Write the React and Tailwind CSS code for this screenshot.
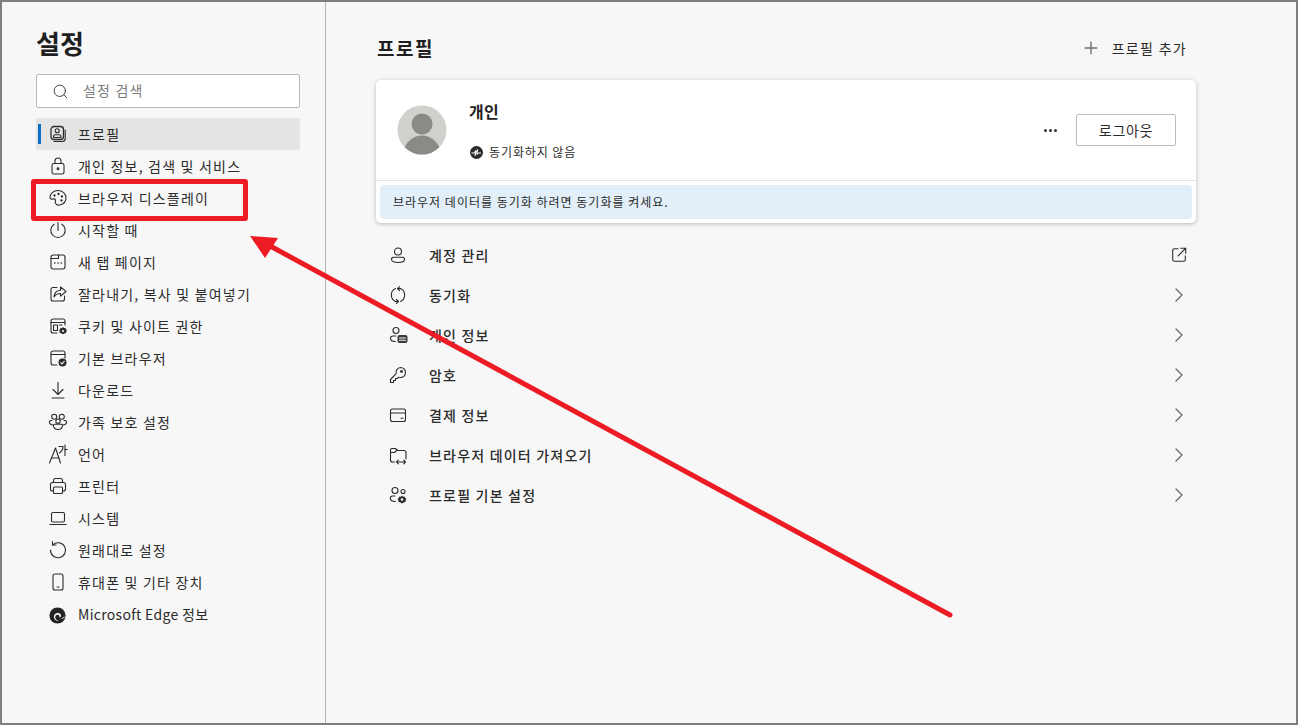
import { ChevronRight, Plus, Search } from "lucide-react"

const stroke = { fill: "none", stroke: "#2b2b2b", strokeWidth: 1.1, strokeLinecap: "round", strokeLinejoin: "round" }

const Ico = ({ children, size = 20 }) => (
  <svg width={size} height={size} viewBox="0 0 20 20" {...stroke}>{children}</svg>
)

const navIcons = {
  profile: <Ico><rect x="3" y="2.500" width="12.500" height="13" rx="3" strokeWidth="1.300" /><path d="M17.200 6v8.500a3 3 0 0 1-3 3H6" /><circle cx="9.200" cy="6.800" r="2" /><path d="M5.500 13.500v-1c0-1 .8-1.700 1.700-1.700h4c1 0 1.700.7 1.700 1.700v1z" /></Ico>,
  lock: <Ico><rect x="4" y="7.500" width="12" height="10.500" rx="1.800" /><path d="M7 7.500V5a3 3 0 0 1 6 0v2.500" /><circle cx="10" cy="12.800" r=".9" fill="#2b2b2b" /></Ico>,
  palette: <Ico><path d="M10 2.500c-4.500 0-8 3.200-8 7 0 1.300 1 1.800 2 1.600 1.400-.3 3-.6 3.400.6.4 1.300-.8 2.200.2 3.800 1 1.600 3 1.900 5 1.300 3.400-1 5.400-3.800 5.400-7 0-4.200-3.500-7.300-8-7.300z" /><circle cx="6.500" cy="7.500" r=".6" fill="#2b2b2b" /><circle cx="10.500" cy="6" r=".6" fill="#2b2b2b" /><circle cx="14" cy="8.500" r=".6" fill="#2b2b2b" /><circle cx="13.500" cy="12.500" r=".6" fill="#2b2b2b" /></Ico>,
  power: <Ico><path d="M10 2.500v8" /><path d="M6.200 4.200a7.200 7.200 0 1 0 7.600 0" /></Ico>,
  newtab: <Ico><rect x="3" y="3" width="14" height="14" rx="2.200" /><path d="M3 6.500h7.500V3" /><path d="M6.800 11h.1M10 11h.1M13.200 11h.1" strokeWidth="1.600" /></Ico>,
  share: <Ico><path d="M9 3.500H5A2 2 0 0 0 3 5.500V15a2 2 0 0 0 2 2h9.500a2 2 0 0 0 2-2v-3" /><path d="M12.500 2.800 18 7.500l-5.500 4.700V9.500c-3 0-5 1-6.500 3.500.3-4 2.500-6.500 6.500-6.800z" /></Ico>,
  cookies: <Ico><path d="M9 17H5a2 2 0 0 1-2-2V5a2 2 0 0 1 2-2h10a2 2 0 0 1 2 2v4" /><path d="M3 6.500h14" /><rect x="5.500" y="9" width="4" height="5.500" /><path d="M11.500 9H14" /><path d="M15 11l1 1.100 1.500-.2.400 1.400 1.100 1-.8 1.200.1 1.400-1.400.3-1.900 1-1.900-1-1.400-.3.100-1.400-.8-1.200 1.100-1 .4-1.400 1.500.2z" fill="#2b2b2b" stroke="none" /><circle cx="15" cy="15" r="1.100" fill="#f7f7f7" stroke="none" /></Ico>,
  browser: <Ico><path d="M9 17H5a2 2 0 0 1-2-2V5a2 2 0 0 1 2-2h10a2 2 0 0 1 2 2v5" /><path d="M3 6.500h14" /><circle cx="14.500" cy="14.500" r="4" fill="#2b2b2b" stroke="none" /><path d="m12.800 14.600 1.200 1.200 2.200-2.400" stroke="#f7f7f7" /></Ico>,
  download: <Ico><path d="M10 2.500v11.500" /><path d="m5 9.500 5 5 5-5" /><path d="M4 18h12" /></Ico>,
  family: <Ico><circle cx="6.200" cy="4.800" r="2.500" /><circle cx="13.800" cy="4.800" r="2.500" /><circle cx="10" cy="9.200" r="2.200" /><path d="M4 8.500H3c-1.200 0-1.800 1-1.500 2.200.4 1.500 1.800 2.300 3.500 2.300" /><path d="M16 8.500h1c1.200 0 1.800 1 1.500 2.200-.4 1.500-1.800 2.300-3.500 2.300" /><path d="M5.500 13.300c0 2.500 2 4.200 4.500 4.200s4.500-1.700 4.500-4.200c0-.6-.5-1-1-1h-7c-.5 0-1 .4-1 1z" /></Ico>,
  language: <Ico><path d="M1.500 19 7.500 4l5 15" /><path d="M3.500 14h7.500" /><path d="M11 2.500h4c0 3-1.300 5-3.500 6.500" /><path d="M17 1v10.500" /><path d="M17 5.500h2.200" /></Ico>,
  printer: <Ico><path d="M5.500 6.500V4.500a2 2 0 0 1 2-2h5a2 2 0 0 1 2 2v2" /><path d="M5.500 15H4.500a2 2 0 0 1-2-2V8.500a2 2 0 0 1 2-2h11a2 2 0 0 1 2 2V13a2 2 0 0 1-2 2h-1" /><rect x="5.500" y="11" width="9" height="6.500" rx="1" /></Ico>,
  system: <Ico><rect x="3.500" y="4.500" width="13" height="9.500" rx="1.500" /><path d="M2 16.500h16" /></Ico>,
  reset: <Ico><path d="M4.800 4.800A7.500 7.500 0 1 1 2.500 10" /><path d="M4.500 1.500v3.500H8" /></Ico>,
  phone: <Ico><rect x="5" y="2" width="10" height="16" rx="2" /><path d="M9 15h2" /></Ico>,
}

const navItems = [
  ["프로필", "profile"],
  ["개인 정보, 검색 및 서비스", "lock"],
  ["브라우저 디스플레이", "palette"],
  ["시작할 때", "power"],
  ["새 탭 페이지", "newtab"],
  ["잘라내기, 복사 및 붙여넣기", "share"],
  ["쿠키 및 사이트 권한", "cookies"],
  ["기본 브라우저", "browser"],
  ["다운로드", "download"],
  ["가족 보호 설정", "family"],
  ["언어", "language"],
  ["프린터", "printer"],
  ["시스템", "system"],
  ["원래대로 설정", "reset"],
  ["휴대폰 및 기타 장치", "phone"],
]

const EdgeLogo = () => (
  <svg width="17" height="17" viewBox="0 0 20 20">
    <circle cx="10" cy="10" r="9.500" fill="#242424" />
    <path d="M6 12.500c-.8-3 1.500-5.500 4.500-5.500 2.200 0 3.700 1.500 3.600 3.200-.1 1.100-.9 1.800-2 1.900.6-1.500-.4-2.900-2-2.900-2 0-3.200 1.800-2.600 3.800.6 1.900 2.300 3 4 3.300-2.800.4-5-1.300-5.500-3.800z" fill="#f7f7f7" />
    <path d="M19.500 11c-.8 1.800-3 3.400-6 3.100 1.500-.5 2.500-1.300 3-2.300.9.100 2-.2 3-.8z" fill="#bdbdbd" />
  </svg>
)

const mainRows = [
  ["계정 관리", <Ico key="a"><circle cx="10" cy="6.500" r="3.500" /><path d="M3.500 14.500c0-1.500 1-2.200 2-2.200h9c1 0 2 .7 2 2.200 0 2-3 3-6.500 3s-6.500-1-6.500-3z" /></Ico>, true],
  ["동기화", <Ico key="b"><path d="M7.500 3.600A7 7 0 0 0 7.500 16.400" /><path d="M12.500 16.400A7 7 0 0 0 12.500 3.600" /><path d="M12.500 3.600H9.500M9.500 3.600l2-2M9.500 3.600l2 2" /><path d="M7.500 16.400h3M10.500 16.400l-2-2M10.500 16.400l-2 2" /></Ico>],
  ["개인 정보", <Ico key="c"><circle cx="8" cy="5.500" r="3" /><path d="M8 11H5a2.500 2.500 0 0 0-2.500 2.500c0 2 2 3 5 3" /><rect x="9.500" y="10" width="10" height="8" rx="2" fill="#3a3a3a" stroke="none" /><path d="M11.500 13h6M11.500 15.300h6" stroke="#f7f7f7" /></Ico>],
  ["암호", <Ico key="d"><path d="M12.500 2.500a5 5 0 0 1 0 10c-.7 0-1.300-.1-1.800-.4L9.500 13.500H7.500v2h-2v2h-3v-3l5.600-5.800a5 5 0 0 1 4.400-6.200z" /><circle cx="13.500" cy="6.500" r=".9" /></Ico>],
  ["결제 정보", <Ico key="e"><rect x="2.500" y="4" width="15" height="12.500" rx="2" /><path d="M2.500 8h15" /><path d="M13 13.200h2" /></Ico>],
  ["브라우저 데이터 가져오기", <Ico key="f"><path d="M6.500 17H4.500a2 2 0 0 1-2-2V5a1.500 1.500 0 0 1 1.500-1.500h3.500l2 2h6.500a2 2 0 0 1 2 2V14" /><path d="M2.500 7.500l4 0 2-2" /><path d="M8.500 17h9M8.500 17l1.800-1.800M8.500 17l1.800 1.800M17.500 17l-1.800-1.800M17.500 17l-1.800 1.800" /></Ico>],
  ["프로필 기본 설정", <Ico key="g"><circle cx="7" cy="5.500" r="3" /><circle cx="15" cy="6.500" r="2" /><path d="M7 11H4.500A2.200 2.200 0 0 0 2.300 13.200c0 2 2 3.300 5.200 3.300" /><path d="M14 10.500l1 1.300 1.700-.3.500 1.600 1.300 1-1 1.300.1 1.600-1.600.3L14 18.500l-2-1.200-1.600-.3.100-1.600-1-1.300 1.300-1 .5-1.600 1.700.3z" fill="#2b2b2b" stroke="none" /><circle cx="14" cy="14.500" r="1.300" fill="#f7f7f7" stroke="none" /></Ico>],
]

function Sidebar() {
  return (
    <aside className="w-[324px] shrink-0 border-r border-[#b4b4b4] pl-[34px] pr-[25px] pt-[24px]">
      <h1 className="text-[26px] leading-[34px] font-bold text-[#1f1f1f]">설정</h1>
      <div className="mt-[14px] h-[34px] flex items-center bg-white border border-[#b9b9b9] rounded-[2px] pl-[15px]">
        <Search size={17} strokeWidth={1.300} color="#333" />
        <span className="ml-[14px] pb-[2px] text-sm text-[#7b7b7b] tracking-[1.2px]">설정 검색</span>
      </div>
      <nav className="mt-[10px]">
        {navItems.map(([label, icon], i) => (
          <div key={label} className={`relative h-[32px] flex items-center pl-[12px] rounded-[2px] ${i === 0 ? "bg-[#e4e4e4]" : ""}`}>
            {i === 0 && <span className="absolute left-[2px] top-[6px] h-[20px] w-[3px] bg-[#0a6fc9]" />}
            <span className="flex w-[20px] justify-center">{navIcons[icon]}</span>
            <span className="ml-[10px] pb-[1px] text-sm text-[#2b2b2b] tracking-[1.2px]">{label}</span>
          </div>
        ))}
        <div className="h-[32px] flex items-center pl-[13px] mt-px">
          <EdgeLogo />
          <span className="ml-[12px] pb-[2px] text-sm text-[#2b2b2b] tracking-[0.3px]">Microsoft Edge 정보</span>
        </div>
      </nav>
    </aside>
  )
}

function ProfileCard() {
  return (
    <div className="mt-[14px] bg-white rounded-[5px] shadow-[0_1px_4px_rgba(0,0,0,0.25)] pb-[4px]">
      <div className="h-[101px] flex items-center border-b border-[#e3e3e3] pl-[21px] pr-[20px]">
        <svg width="50" height="50" viewBox="0 0 50 50" className="shrink-0">
          <defs><clipPath id="avatar"><circle cx="25" cy="25" r="24.500" /></clipPath></defs>
          <circle cx="25" cy="25" r="24.500" fill="#d2d0cd" />
          <circle cx="25" cy="19" r="10.500" fill="#8c8a87" />
          <circle cx="25" cy="49" r="18.500" fill="#8c8a87" clipPath="url(#avatar)" />
        </svg>
        <div className="ml-[22px] h-full flex flex-col justify-start">
          <div className="mt-[19px] text-base leading-[24px] font-semibold text-[#222] tracking-[0.3px]">개인</div>
          <div className="mt-[21px] flex items-center pl-px">
            <svg width="13" height="13" viewBox="0 0 13 13">
              <circle cx="6.500" cy="6.500" r="6.500" fill="#2b2b2b" />
              <path d="M1.500 7h3l1-2.500-.5 5 2.500-6-.5 5 1-1.500h3" fill="none" stroke="#fff" strokeWidth="1" />
            </svg>
            <span className="ml-[6px] text-xs text-[#2b2b2b] tracking-[0.9px]">동기화하지 않음</span>
          </div>
        </div>
        <div className="ml-auto flex items-center">
          <div className="flex gap-[2px] mr-[19px]">
            <span className="w-[3px] h-[3px] rounded-full bg-[#333]" />
            <span className="w-[3px] h-[3px] rounded-full bg-[#333]" />
            <span className="w-[3px] h-[3px] rounded-full bg-[#333]" />
          </div>
          <button className="w-[100px] h-[32px] bg-white border border-[#bdbdbd] rounded-[2px] text-sm text-[#2b2b2b] tracking-[0.7px]">로그아웃</button>
        </div>
      </div>
      <div className="mx-[4px] mt-[4px] h-[34px] flex items-center rounded-[4px] bg-[#e2eef8] pl-[13px] text-xs text-[#2b2b2b] tracking-[1px]">
        브라우저 데이터를 동기화 하려면 동기화를 켜세요.
      </div>
    </div>
  )
}

function Main() {
  return (
    <main className="w-[820px] ml-[50px] pt-[28px]">
      <div className="flex items-center justify-between h-[36px]">
        <h2 className="pl-px text-[19px] font-semibold text-[#1f1f1f] tracking-[1.5px]">프로필</h2>
        <div className="flex items-center pr-[9px]">
          <Plus size={20} strokeWidth={1.700} color="#707070" />
          <span className="ml-[11px] text-sm text-[#2b2b2b] tracking-[1.3px]">프로필 추가</span>
        </div>
      </div>
      <ProfileCard />
      <div className="mt-[12px]">
        {mainRows.map(([label, icon, external]) => (
          <div key={label} className="h-[40px] flex items-center pl-[12px] pr-[5px]">
            <span className="flex w-[20px]">{icon}</span>
            <span className="ml-[21px] pb-[1px] text-sm font-medium text-[#2b2b2b] tracking-[1.2px]">{label}</span>
            <span className="ml-auto flex w-[24px] justify-center">
              {external ? (
                <Ico size={18}>
                  <path d="M9 3H5a2 2 0 0 0-2 2v10a2 2 0 0 0 2 2h10a2 2 0 0 0 2-2v-4" strokeWidth="1.200" />
                  <path d="M9 11l8.500-8.500M12 2.500h5.500V8" strokeWidth="1.200" />
                </Ico>
              ) : (
                <ChevronRight size={24} strokeWidth={1.200} color="#666" />
              )}
            </span>
          </div>
        ))}
      </div>
    </main>
  )
}

export default function App() {
  return (
    <div className="relative w-[1298px] h-[725px] overflow-hidden flex bg-[#f7f7f7] border-2 border-[#7f7f7f] font-['Noto_Sans_CJK_KR','Liberation_Sans',sans-serif]">
      <Sidebar />
      <Main />
      {/* red callout box + arrow */}
      <div className="absolute left-[29px] top-[177px] w-[217px] h-[42px] border-[5px] border-[#ed1c24] rounded-[3px]" />
      <svg className="absolute left-[-2px] top-[-2px]" width="1298" height="725" viewBox="0 0 1298 725">
        <path d="M950 615 272 247" stroke="#ed1c24" strokeWidth="5" strokeLinecap="round" fill="none" />
        <path d="M250 236 278 238 265 258z" fill="#ed1c24" />
      </svg>
    </div>
  )
}
